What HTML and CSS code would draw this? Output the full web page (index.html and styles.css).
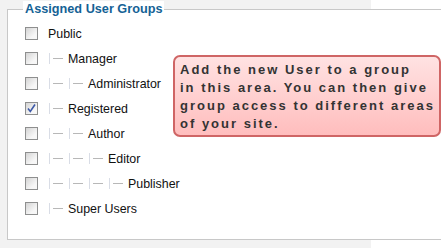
FILE: index.html
```html
<!DOCTYPE html>
<html lang="en">

<head>
    <meta charset="UTF-8">
    <title>Assigned User Groups</title>
    <link rel="stylesheet" href="styles.css">
</head>

<body>
    <div class="page">
        <div class="box">
            <div class="legend">Assigned User Groups</div>
            <ul class="groups">
                <li><span class="check"></span><span class="name">Public</span></li>
                <li><span class="check"></span><span class="gi"></span><span class="name">Manager</span></li>
                <li><span class="check"></span><span class="gi"></span><span class="gi"></span><span class="name">Administrator</span></li>
                <li>
                    <span class="check checked">
                        <svg width="11" height="11" viewBox="0 0 11 11"><path d="M2 5.5 L4.3 8.5 L9 1.5" fill="none" stroke="#3e5aa8" stroke-width="1.6"/></svg>
                    </span><span class="gi"></span><span class="name">Registered</span>
                </li>
                <li><span class="check"></span><span class="gi"></span><span class="gi"></span><span class="name">Author</span></li>
                <li><span class="check"></span><span class="gi"></span><span class="gi"></span><span class="gi"></span><span class="name">Editor</span></li>
                <li><span class="check"></span><span class="gi"></span><span class="gi"></span><span class="gi"></span><span class="gi"></span><span class="name">Publisher</span></li>
                <li><span class="check"></span><span class="gi"></span><span class="name">Super Users</span></li>
            </ul>
        </div>
    </div>

    <div class="tip">
        Add the new User to a group<br>
        in this area. You can then give<br>
        group access to different areas<br>
        of your site.
    </div>
</body>

</html>
```

FILE: styles.css
```css
* {
    box-sizing: border-box;
}

body {
    margin: 0;
    background: #fff;
    font-family: 'Liberation Sans', Arial, sans-serif;
    overflow: hidden;
}

.page {
    width: 371px;
    height: 248px;
    background: #f2f2f2;
    padding: 9px 0 0 7px;
}

.box {
    width: 434px;
    height: 231px;
    background: #fff;
    border: 1px solid #c8c8c8;
    border-right: none;
}

.legend {
    display: block;
    width: max-content;
    margin: -9px 0 0 15px;
    padding: 0 2px;
    background: #fff;
    color: #146295;
    font-weight: bold;
    font-size: 12.7px;
    line-height: 16px;
}

.groups {
    list-style: none;
    margin: 4px 0 0;
    padding: 0 0 0 17px;
}

.groups li {
    height: 25px;
    display: flex;
    align-items: center;
    font-size: 12.4px;
    color: #111;
}

.check {
    width: 13px;
    height: 13px;
    margin-right: 10px;
    border: 1px solid #8e8f8f;
    background: linear-gradient(135deg, #d4d4d4, #f7f7f7 70%);
    display: flex;
    align-items: center;
    justify-content: center;
}

.gi {
    width: 20px;
    height: 11px;
    position: relative;
}

.gi::before {
    content: '';
    position: absolute;
    left: 1px;
    top: 0;
    width: 1px;
    height: 11px;
    background: #d9dde6;
}

.gi::after {
    content: '';
    position: absolute;
    left: 5px;
    top: 5px;
    width: 10px;
    height: 1px;
    background: #b8b8b8;
}

.tip {
    position: absolute;
    left: 173px;
    top: 55px;
    width: 268px;
    height: 82px;
    padding: 4px 0 0 5px;
    border: 2px solid #cf6565;
    border-radius: 7px;
    background: linear-gradient(#ffe2e2, #ffd0d0 50%, #ffbdbd);
    color: #333;
    font-weight: bold;
    font-size: 13px;
    line-height: 18px;
    letter-spacing: 2px;
    white-space: nowrap;
}
```
